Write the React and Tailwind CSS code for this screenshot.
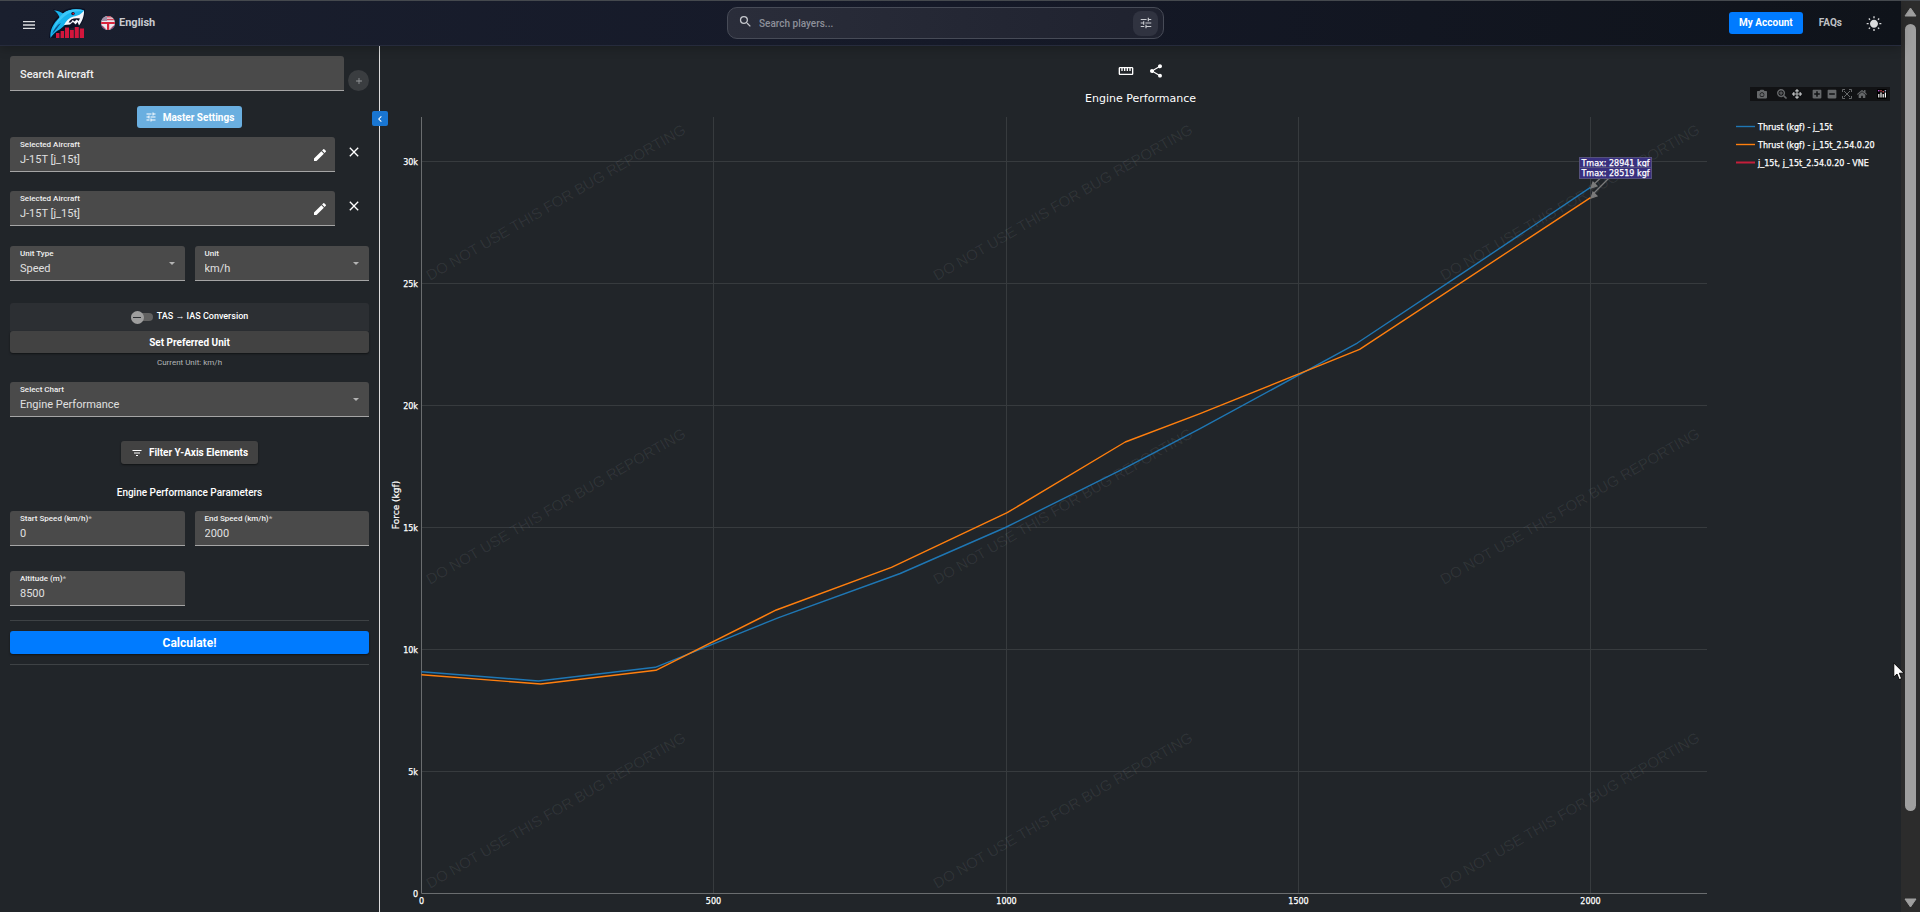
import React, { useId } from "react";
import {
  MdMenu, MdSearch, MdTune, MdClose, MdEdit, MdAdd, MdFilterList,
  MdStraighten, MdShare, MdWbSunny, MdChevronLeft,
} from "react-icons/md";
import { FaCamera, FaSearchPlus, FaArrowsAlt, FaPlusSquare, FaMinusSquare, FaHome } from "react-icons/fa";

function SharkLogo() {
  return (
    <svg viewBox="0 0 36 32" className="h-8 w-9" aria-hidden="true">
      <path d="M4 2 L13 5 C19 0 28 0 36 2 C36 8 35 15 30 20 L22 21 L14 24 L7 31 H0 C1 20 4 13 10 9 Z" fill="#0a1124" />
      <path d="M5 3.2 C9 3.6 12 5 14 6.6 C20 1.6 28 1.8 35 3.2 C34.6 6 33 8 30 9.6 C26 9 22 11 20 14 C16 18 12 22 8 24 C5 26 3 29 1.6 31 C.4 24 4 16 10.6 10.4 C9.6 7.6 7.6 5 5 3.2 Z" fill="#17b4ee" />
      <path d="M14 6.6 C20 1.6 28 1.8 35 3.2 C31 5 26 3.6 21 6 C14 9 8 16 4 24 C5 17 10 11 14 6.6 Z" fill="#3cc8f8" />
      <path d="M35 3.6 C35.4 9 33 14.6 30 18.6 L28.6 15 L26.6 17.4 L24 15 L21 17.6 L15 18 C17 14 20 10.6 24.6 9.4 C29 9.4 32.6 7 35 3.6 Z" fill="#f3f6fa" />
      <path d="M19.6 15.6 C21 11.6 26 10.4 31 11.6 L29.6 14 L27.6 12.6 L25.6 14.6 L23.6 13 L22 15.4 Z" fill="#0c1328" />
      <circle cx="24" cy="6.6" r="1.7" fill="#0c1328" />
      <circle cx="24.3" cy="6.7" r=".9" fill="#d21f3c" />
      <path d="M3 27 C5 22 8 18 12 16 C9 20 7 23 3 27 Z" fill="#0c4f86" />
      <path d="M7 31 V26 H10.4 V31 Z M11.6 31 V24 H15 V31 Z M16 31 V20.6 H20 V31 Z M21 31 V23 H24.8 V31 Z M25.8 31 V20 H29.8 V31 Z M30.8 31 V21.6 H35 V31 Z" fill="#d3163c" />
    </svg>
  );
}

function Flag() {
  return (
    <svg viewBox="0 0 14 14" className="size-3.5" aria-hidden="true">
      <defs>
        <clipPath id="flag-round"><circle cx="7" cy="7" r="7" /></clipPath>
      </defs>
      <g clipPath="url(#flag-round)">
        <rect width="14" height="14" fill="#e8e8ee" />
        <path d="M6 0 H14 V1.4 H6 Z M6 2.8 H14 V4.2 H6 Z" fill="#d0455a" />
        <path d="M0 0 H6 V5 H0 Z" fill="#a08fa8" />
        <path d="M0 8.6 L5 14 H0 Z M14 8.6 L9 14 H14 Z" fill="#27408f" />
        <path d="M0 6 H14 V8 H0 Z M6 6 H8.2 V14 H6 Z" fill="#d8243c" />
        <path d="M1 9.6 L4.4 13 M13 9.6 L9.6 13" stroke="#d8243c" strokeWidth=".9" />
      </g>
    </svg>
  );
}

function Header() {
  return (
    <header className="relative z-10 flex h-[45px] shrink-0 items-center border-b border-[#262b3c] bg-gradient-to-r from-[#1a1f2e] via-[#151928] to-[#0f131a] pr-[19px] pl-[9px] shadow-[0_2px_10px_rgba(0,0,0,0.25)]">
      <div className="flex flex-1 items-center">
        <button type="button" aria-label="Menu" className="grid h-8 w-10 place-items-center pt-1 text-[#dcdde0]">
          <MdMenu className="size-4" />
        </button>
        <a href="#home" aria-label="Home"><SharkLogo /></a>
        <button type="button" className="ml-4 flex items-center gap-1 text-[11px] font-bold text-[#c9cad0]">
          <Flag />
          English
        </button>
      </div>
      <form className="flex h-8 w-[437px] items-center rounded-[10px] border border-[#474b57] bg-gradient-to-r from-[#2a2d3a] to-[#1f222f] pr-[5px] pl-2.5">
        <MdSearch className="mb-1 size-[15px] text-[#c6c8cd]" aria-hidden="true" />
        <input
          type="search"
          aria-label="Search players"
          placeholder="Search players..."
          className="ml-1.5 min-w-0 flex-1 bg-transparent text-[10px] font-medium text-white placeholder:text-[#8d909a] focus:outline-none"
        />
        <button type="button" aria-label="Search filters" className="grid size-[25px] place-items-center rounded-lg bg-[#303340] text-[#c8cacf]">
          <MdTune className="size-3.5" />
        </button>
      </form>
      <nav className="flex flex-1 items-center justify-end">
        <a href="#account" className="rounded-[3px] bg-[#007bff] px-2.5 py-[3px] text-[10px] leading-4 font-bold text-white">My Account</a>
        <a href="#faqs" className="px-4 text-[10px] leading-4 font-bold text-[#bfc0c4]">FAQs</a>
        <button type="button" aria-label="Light theme" className="ml-2 pt-0.5 text-[#d9dadc]">
          <MdWbSunny className="size-4" />
        </button>
      </nav>
    </header>
  );
}

const fieldBox = "relative flex h-[35px] min-w-0 flex-col rounded-t-[3px] border-b border-[#a5a5a5] bg-[#4a4a4a] px-2.5 pt-0.5";
const fieldLabel = "text-[8px] leading-[11px] font-medium text-[#f0f0f0]";
const fieldValue = "mt-0.5 w-full appearance-none bg-transparent text-[11px] leading-[15px] text-[#e0e0e0] focus:outline-none";

function TextField({ label, value, required, className = "flex-1", action }) {
  const id = useId();
  return (
    <div className={`${fieldBox} ${className}`}>
      <label htmlFor={id} className={fieldLabel}>
        {label}
        {required && <span className="text-[#b5b5b5]">*</span>}
      </label>
      <input id={id} defaultValue={value} className={fieldValue} />
      {action}
    </div>
  );
}

function SelectField({ label, value }) {
  const id = useId();
  return (
    <div className={`${fieldBox} flex-1`}>
      <label htmlFor={id} className={fieldLabel}>{label}</label>
      <select id={id} className={fieldValue} defaultValue={value}>
        <option>{value}</option>
      </select>
      <svg viewBox="0 0 6 3" className="pointer-events-none absolute top-4 right-2.5 h-[3px] w-1.5" aria-hidden="true">
        <path d="M0 0 H6 L3 3 Z" fill="#b4b4b4" />
      </svg>
    </div>
  );
}

function SelectedAircraft({ name }) {
  return (
    <div className="flex items-start">
      <TextField
        label="Selected Aircraft"
        value={name}
        action={
          <button type="button" aria-label="Edit aircraft" className="absolute top-2.5 right-[7px] text-white">
            <MdEdit className="size-4" />
          </button>
        }
      />
      <button type="button" aria-label="Remove aircraft" className="mt-[7px] mr-[7px] ml-[11px] text-white">
        <MdClose className="size-4" />
      </button>
    </div>
  );
}

function Sidebar() {
  return (
    <aside className="relative w-[380px] shrink-0 border-r border-[#dcdcdc] px-2.5 pt-2.5">
      <div className="flex items-end gap-1">
        <div className="h-[35px] flex-1 rounded-t-[3px] border-b border-[#a5a5a5] bg-[#4a4a4a] px-2.5">
          <input aria-label="Search Aircraft" placeholder="Search Aircraft" className="block h-full w-full bg-transparent pt-0.5 text-[11px] font-medium text-white placeholder:text-[#f0f0f0] focus:outline-none" />
        </div>
        <button type="button" aria-label="Add aircraft" className="grid size-[21px] place-items-center rounded-full bg-[#3a3d40] text-[#96999b]">
          <MdAdd className="size-2.5" />
        </button>
      </div>

      <div className="mt-[15px] flex justify-center">
        <button type="button" className="flex h-[22px] items-center gap-1.5 rounded-[3px] bg-[#6aafe0] px-2 text-[10px] font-bold text-white">
          <MdTune className="size-3" aria-hidden="true" />
          Master Settings
        </button>
      </div>

      <div className="mt-[9px] flex flex-col gap-[19px]">
        <SelectedAircraft name="J-15T [j_15t]" />
        <SelectedAircraft name="J-15T [j_15t]" />
      </div>

      <div className="mt-5 flex gap-2.5">
        <SelectField label="Unit Type" value="Speed" />
        <SelectField label="Unit" value="km/h" />
      </div>

      <div className="mt-[22px] flex h-7 items-center justify-center rounded-t-[3px] bg-[#2c2f33]">
        <label className="flex items-center gap-1 text-[9px] font-medium text-white">
          <input type="checkbox" role="switch" className="peer sr-only" />
          <span className="flex h-2 w-[22px] items-center rounded-full bg-[#616161]">
            <span className="grid size-[13px] shrink-0 place-items-center rounded-full bg-[#9e9e9e]">
              <span className="h-px w-2 bg-[#2c2f33]" />
            </span>
          </span>
          TAS → IAS Conversion
        </label>
      </div>
      <button type="button" className="block h-[22px] w-full rounded-[3px] bg-[#424242] text-[10px] font-bold text-white shadow-[0_1px_2px_rgba(0,0,0,0.5)]">
        Set Preferred Unit
      </button>
      <p className="mt-1 text-center text-[8px] leading-3 text-[#b4b6b8]">Current Unit: km/h</p>

      <div className="mt-[13px] flex">
        <SelectField label="Select Chart" value="Engine Performance" />
      </div>

      <div className="mt-6 flex justify-center">
        <button type="button" className="flex h-[23px] items-center gap-1.5 rounded-[3px] bg-[#424242] px-2.5 text-[10px] font-bold text-white shadow-[0_1px_2px_rgba(0,0,0,0.5)]">
          <MdFilterList className="size-3" aria-hidden="true" />
          Filter Y-Axis Elements
        </button>
      </div>

      <h2 className="mt-[22px] text-center text-[10px] leading-[14px] font-medium text-white">Engine Performance Parameters</h2>

      <div className="mt-[11px] grid grid-cols-2 gap-x-2.5 gap-y-[25px]">
        <TextField label="Start Speed (km/h)" value="0" required />
        <TextField label="End Speed (km/h)" value="2000" required />
        <TextField label="Altitude (m)" value="8500" required />
      </div>

      <hr className="mt-3.5 border-[#3e4245]" />
      <button type="button" className="mt-2.5 block h-[23px] w-full rounded-[3px] bg-[#007bff] text-[12px] font-bold text-white shadow-[0_1px_2px_rgba(0,0,0,0.5)]">
        Calculate!
      </button>
      <hr className="mt-2.5 border-[#3e4245]" />

      <button type="button" aria-label="Collapse panel" className="absolute top-[65px] -right-[9px] grid h-[15px] w-4 place-items-center rounded-[2px] bg-[#1976d2] text-white">
        <MdChevronLeft className="size-3" />
      </button>
    </aside>
  );
}

/* Chart geometry: the origin of the axes and the scale of each one. */
const ORIGIN = { x: 41.5, y: 783.5 };
const PLOT_RIGHT = 1327;
const PLOT_TOP = 7;
const sx = (speed) => ORIGIN.x + speed * 0.5845;
const sy = (force) => ORIGIN.y - force * 0.0244;
const gridX = (speed) => Math.floor(sx(speed)) + 0.5;
const gridY = (force) => Math.floor(sy(force)) + 0.5;

const CURRENT = [
  [0, 9090], [200, 8710], [400, 9270], [611, 11307], [819, 13115], [999, 15000],
  [1204, 17446], [1332, 19049], [1601, 22561], [1785, 25484], [2000, 28941],
];
const PREVIOUS = [
  [0, 8967], [204, 8586], [401, 9148], [607, 11619], [804, 13369], [1002, 15607],
  [1204, 18504], [1332, 19664], [1605, 22303], [2000, 28519],
];
const toPoints = (series) => series.map(([s, f]) => `${sx(s)},${sy(f)}`).join(" ");

const LEGEND = [
  { name: "Thrust (kgf) - j_15t", color: "#1f77b4", width: 1.4 },
  { name: "Thrust (kgf) - j_15t_2.54.0.20", color: "#ff7f0e", width: 1.4 },
  { name: "j_15t, j_15t_2.54.0.20 - VNE", color: "#c41e3a", width: 2 },
];

function Chart() {
  return (
    <svg viewBox="0 0 1521 802" className="block w-full font-['Verdana','DejaVu_Sans',sans-serif]" role="img" aria-label="Engine performance: force by speed">
      <g stroke="#373b3e" strokeWidth="1">
        {[5000, 10000, 15000, 20000, 25000, 30000].map((f) => (
          <line key={f} x1={ORIGIN.x} x2={PLOT_RIGHT} y1={gridY(f)} y2={gridY(f)} />
        ))}
        {[500, 1000, 1500, 2000].map((s) => (
          <line key={s} x1={gridX(s)} x2={gridX(s)} y1={PLOT_TOP} y2={ORIGIN.y} />
        ))}
      </g>
      <path d={`M${ORIGIN.x} ${PLOT_TOP} V${ORIGIN.y} H${PLOT_RIGHT}`} fill="none" stroke="#6a6d6f" />

      <g fontSize="15" fill="#fff" fillOpacity=".07" className="pointer-events-none font-['Liberation_Sans',Arial,sans-serif]">
        {[171, 475, 779].map((y) =>
          [50, 557, 1064].map((x) => (
            <text key={`${x}-${y}`} transform={`translate(${x} ${y}) rotate(-30)`}>DO NOT USE THIS FOR BUG REPORTING</text>
          ))
        )}
      </g>

      <g fill="none" strokeWidth="1.4" strokeLinejoin="round">
        <polyline points={toPoints(CURRENT)} stroke="#1f77b4" />
        <polyline points={toPoints(PREVIOUS)} stroke="#ff7f0e" />
      </g>

      <g fill="#fff" stroke="#fff" strokeWidth=".25" fontSize="8">
        {[0, 5, 10, 15, 20, 25, 30].map((k) => (
          <text key={k} x="38" y={Math.round(gridY(k * 1000)) + 3} textAnchor="end">{k === 0 ? "0" : `${k}k`}</text>
        ))}
        {[0, 500, 1000, 1500, 2000].map((s) => (
          <text key={s} x={gridX(s)} y="794" textAnchor="middle">{s}</text>
        ))}
      </g>
      <text transform="translate(19 395) rotate(-90)" textAnchor="middle" fontSize="9" fill="#fff" stroke="#fff" strokeWidth=".2">Force (kgf)</text>

      <g stroke="#7b7b7b" strokeWidth="1.2" fill="#7b7b7b">
        <path d="M1226 63 L1213 75" />
        <path d="M1229 68 L1213 84" />
        <path d="M1211 78 L1213 72 L1217 76 Z M1211 88 L1213 82 L1217 86 Z" />
      </g>
      <g fontSize="8">
        {[["Tmax: 28941 kgf", 47], ["Tmax: 28519 kgf", 57]].map(([label, y]) => (
          <g key={label}>
            <rect x="1199.5" y={y + 0.5} width="72" height="11" fill="#39307f" stroke="#55517c" />
            <text x="1235.5" y={y + 9} textAnchor="middle" fill="#fff" stroke="#fff" strokeWidth=".25">{label}</text>
          </g>
        ))}
      </g>

      <g fontSize="8">
        {LEGEND.map((item, i) => (
          <g key={item.name}>
            <line x1="1356" x2="1375" y1={16.5 + i * 18} y2={16.5 + i * 18} stroke={item.color} strokeWidth={item.width} />
            <text x="1378" y={20 + i * 18} fill="#fff" stroke="#fff" strokeWidth=".25">{item.name}</text>
          </g>
        ))}
      </g>
    </svg>
  );
}

function ModeBar() {
  return (
    <div role="toolbar" aria-label="Chart tools" className="absolute top-[41px] right-[11px] flex h-3.5 items-center bg-[#111214] pr-[3px] pl-[7px] text-[#66686a]">
      <button type="button" aria-label="Download plot" className="mr-2.5"><FaCamera className="size-2.5" /></button>
      <button type="button" aria-label="Zoom" className="mr-[5px]"><FaSearchPlus className="size-2.5" /></button>
      <button type="button" aria-label="Pan" className="mr-2.5 text-[#b5b7b8]"><FaArrowsAlt className="size-2.5" /></button>
      <button type="button" aria-label="Zoom in" className="mr-[5px]"><FaPlusSquare className="size-2.5" /></button>
      <button type="button" aria-label="Zoom out" className="mr-[5px]"><FaMinusSquare className="size-2.5" /></button>
      <button type="button" aria-label="Autoscale" className="mr-[5px]">
        <svg viewBox="0 0 10 10" className="size-2.5" fill="none" stroke="currentColor">
          <path d="M.5 3 V.5 H3 M7 .5 H9.5 V3 M9.5 7 V9.5 H7 M3 9.5 H.5 V7 M2 2 L8 8 M8 2 L2 8" />
        </svg>
      </button>
      <button type="button" aria-label="Reset axes" className="mr-2.5"><FaHome className="size-2.5" /></button>
      <a href="#plotly" aria-label="Produced with Plotly">
        <svg viewBox="0 0 10 10" className="size-2.5">
          <rect width="10" height="10" rx="1" fill="#000" />
          <path d="M1.8 5 V8.6 M4 3.4 V8.6 M6.2 5 V8.6 M8.4 3.4 V8.6" stroke="#fff" strokeWidth="1.2" />
          <circle cx="1.8" cy="1.8" r=".8" fill="#e763fa" />
          <circle cx="4" cy="1.8" r=".8" fill="#e8555f" />
          <circle cx="6.2" cy="2.8" r=".8" fill="#e8555f" />
          <circle cx="8.4" cy="1.8" r=".8" fill="#b9c0f5" />
        </svg>
      </a>
    </div>
  );
}

function ScrollRail() {
  return (
    <div className="flex w-[19px] shrink-0 flex-col items-center bg-[#2c2c2c] pt-1.5 pb-1" aria-hidden="true">
      <svg viewBox="0 0 13 10" className="mb-[7px] h-2.5 w-[13px] shrink-0"><path d="M6.5 1 L12 9 H1 Z" fill="#9f9f9f" stroke="#9f9f9f" strokeLinejoin="round" /></svg>
      <div className="w-[11px] flex-[787] rounded-full bg-[#9f9f9f]" />
      <div className="flex-[87]" />
      <svg viewBox="0 0 13 10" className="h-2.5 w-[13px] shrink-0"><path d="M6.5 9 L12 1 H1 Z" fill="#9f9f9f" stroke="#9f9f9f" strokeLinejoin="round" /></svg>
    </div>
  );
}

export default function App() {
  return (
    <div className="relative flex h-screen overflow-hidden border-t border-[#45494e] bg-[#212529] font-['Roboto',sans-serif]">
      <div className="flex min-w-0 flex-1 flex-col">
        <Header />
        <div className="flex min-h-0 flex-1">
          <Sidebar />
          <main className="relative min-w-0 flex-1">
            <div className="flex justify-center gap-3.5 pt-[17px] text-white">
              <button type="button" aria-label="Measure"><MdStraighten className="size-4" /></button>
              <button type="button" aria-label="Share"><MdShare className="size-4" /></button>
            </div>
            <h1 className="mt-2.5 h-[21px] text-center font-['Verdana','DejaVu_Sans',sans-serif] text-[11px] leading-5 text-white">Engine Performance</h1>
            <ModeBar />
            <Chart />
          </main>
        </div>
      </div>
      <ScrollRail />
      <svg viewBox="0 0 12 19" className="pointer-events-none absolute top-[661px] left-[1893px] h-[19px] w-3" aria-hidden="true">
        <path d="M.8 1 V15 L4 12 L6.2 17.6 L8.6 16.6 L6.4 11.2 H11 Z" fill="#fff" stroke="#000" strokeWidth=".9" />
      </svg>
    </div>
  );
}
